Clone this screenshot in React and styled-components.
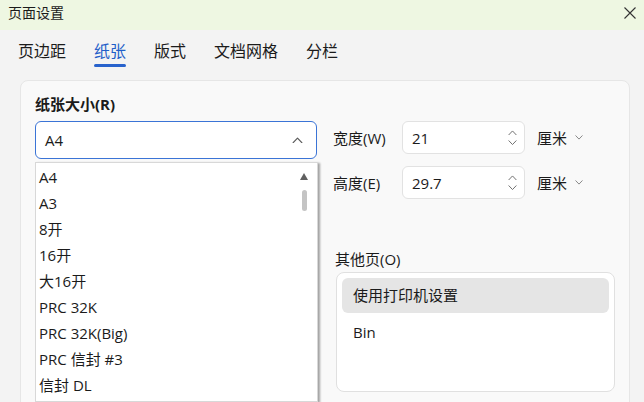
import React from "react";
import styled, {createGlobalStyle} from "styled-components";

const GlobalStyle = createGlobalStyle`
  html, body {
    margin: 0;
    padding: 0;
    background: #f3f3f3;
  }
  body {
    font-family: "Open Sans", "Noto Sans CJK SC", sans-serif;
    color: #1b1b1b;
  }
  #root {
    width: 644px;
    height: 402px;
    overflow: hidden;
  }
`;

const Window = styled.div`
  width: 644px;
  height: 402px;
  background: #f3f3f3;
  display: flex;
  flex-direction: column;
  overflow: hidden;
`;

const TitleBar = styled.div`
  height: 30px;
  flex: none;
  background: #eef7e2;
  display: flex;
  align-items: center;
  justify-content: space-between;
  padding: 0 8px;
`;

const Title = styled.span`
  font-size: 14px;
  line-height: 20px;
  color: #1b1b1b;
  margin-top: -4px;
`;

const CloseButton = styled.div`
  width: 16px;
  height: 16px;
  display: flex;
  align-items: center;
  justify-content: center;
  margin-right: -2px;
  margin-top: -5px;
`;

const Tabs = styled.div`
  display: flex;
  gap: 28px;
  padding: 0 0 0 18px;
  flex: none;
`;

const Tab = styled.div`
  position: relative;
  font-size: 16px;
  line-height: 22px;
  padding: 10px 0 5px;
  color: ${({active}) => (active ? "#1f5fc9" : "#1b1b1b")};

  &::after {
    content: "";
    display: ${({active}) => (active ? "block" : "none")};
    position: absolute;
    left: 0;
    right: 0;
    bottom: 0;
    height: 3px;
    border-radius: 2px;
    background: #2862cc;
  }
`;

const Card = styled.div`
  margin: 13px 14px 0 20px;
  height: 360px;
  flex: none;
  background: #f9f9f9;
  border: 1px solid #e6e6e6;
  border-radius: 8px;
  padding: 13px 14px 0 14px;
  display: grid;
  grid-template-columns: 282px 1fr;
  column-gap: 16px;
  align-content: start;
`;

const SectionLabel = styled.div`
  grid-column: ${({col}) => col || "auto"};
  font-size: 15px;
  line-height: 20px;
  font-weight: ${({bold}) => (bold ? 700 : 400)};
  margin-top: ${({top}) => top || 0}px;
  padding-left: ${({indent}) => indent || 0}px;
`;

const SelectWrap = styled.div`
  position: relative;
  align-self: start;
  margin-top: 7px;
  z-index: 5;
`;

const Select = styled.div`
  height: 38px;
  box-sizing: border-box;
  background: #fff;
  border: 1px solid #3b74d6;
  border-radius: 6px;
  display: flex;
  align-items: center;
  justify-content: space-between;
  padding: 0 13px 0 9px;
  font-size: 15px;
`;

const Dropdown = styled.div`
  position: absolute;
  top: calc(100% + 3px);
  left: 0;
  width: 283px;
  height: 240px;
  box-sizing: border-box;
  background: #fff;
  border: 1px solid #d8d8d8;
  box-shadow: 2px 1px 2px rgba(0, 0, 0, 0.35);
  padding-top: 1px;
  overflow: hidden;
`;

const Option = styled.div`
  height: 26px;
  line-height: 26px;
  font-size: 15px;
  padding-left: 3px;
  white-space: nowrap;
`;

const Scrollbar = styled.div`
  position: absolute;
  top: 10px;
  right: 8px;
  width: 10px;
  display: flex;
  flex-direction: column;
  align-items: center;
  gap: 10px;
`;

const ArrowUp = styled.div`
  width: 0;
  height: 0;
  border-left: 4.5px solid transparent;
  border-right: 4.5px solid transparent;
  border-bottom: 7px solid #606060;
`;

const Thumb = styled.div`
  width: 5px;
  height: 21px;
  border-radius: 3px;
  background: #c4c4c4;
`;

const SizeFields = styled.div`
  display: flex;
  flex-direction: column;
  gap: 12px;
  margin-top: 7px;
`;

const SizeRow = styled.div`
  display: flex;
  align-items: center;
  height: 33px;
`;

const RowLabel = styled.span`
  width: 69px;
  font-size: 15px;
  line-height: 20px;
`;

const NumberInput = styled.div`
  width: 123px;
  height: 33px;
  box-sizing: border-box;
  background: #fff;
  border: 1px solid #e2e2e2;
  border-radius: 6px;
  display: flex;
  align-items: center;
  justify-content: space-between;
  padding: 0 7px 0 9px;
  font-size: 15px;
`;

const Spinner = styled.div`
  display: flex;
  flex-direction: column;
  gap: 4px;
`;

const Unit = styled.span`
  margin-left: 12px;
  font-size: 15px;
  display: flex;
  align-items: center;
  gap: 8px;
`;

const ListBox = styled.div`
  grid-column: ${({col}) => col || "auto"};
  margin-top: 3px;
  margin-left: ${({indent}) => indent || 0}px;
  height: 120px;
  box-sizing: border-box;
  background: #fff;
  border: 1px solid #e0e0e0;
  border-radius: 8px;
  padding: 5px;
  display: flex;
  flex-direction: column;
  gap: 2px;
`;

const ListItem = styled.div`
  height: 35px;
  line-height: 35px;
  padding-left: 11px;
  font-size: 15px;
  border-radius: 6px;
  background: ${({selected}) => (selected ? "#e5e5e5" : "transparent")};
`;

const Chevron = ({up, size = 10, color = "#5a5a5a"}) => (
  <svg width={size} height={size / 2 + 1} viewBox="0 0 10 6" fill="none">
    <path
      d={up ? "M1 5.2 L5 1 L9 5.2" : "M1 0.8 L5 5 L9 0.8"}
      stroke={color}
      strokeWidth="1.1"
      strokeLinecap="round"
      strokeLinejoin="round"
    />
  </svg>
);

const tabs = ["页边距", "纸张", "版式", "文档网格", "分栏"];
const paperSizes = ["A4", "A3", "8开", "16开", "大16开", "PRC 32K", "PRC 32K(Big)", "PRC 信封 #3", "信封 DL"];

function SizeField({label, value}) {
  return (
    <SizeRow>
      <RowLabel>{label}</RowLabel>
      <NumberInput>
        {value}
        <Spinner>
          <Chevron up size={9} color="#707070" />
          <Chevron size={9} color="#707070" />
        </Spinner>
      </NumberInput>
      <Unit>
        厘米
        <Chevron size={8} color="#7a7a7a" />
      </Unit>
    </SizeRow>
  );
}

export default function App() {
  return (
    <Window>
      <GlobalStyle />
      <TitleBar>
        <Title>页面设置</Title>
        <CloseButton>
          <svg width="12" height="12" viewBox="0 0 12 12">
            <path d="M0.5 0.5 L11.5 11.5 M11.5 0.5 L0.5 11.5" stroke="#333" strokeWidth="1.1" />
          </svg>
        </CloseButton>
      </TitleBar>
      <Tabs>
        {tabs.map((t) => (
          <Tab key={t} active={t === "纸张"}>{t}</Tab>
        ))}
      </Tabs>
      <Card>
        <SectionLabel bold>纸张大小(R)</SectionLabel>
        <span />
        <SelectWrap>
          <Select>
            A4
            <Chevron up size={11} />
          </Select>
          <Dropdown>
            {paperSizes.map((p) => (
              <Option key={p}>{p}</Option>
            ))}
            <Scrollbar>
              <ArrowUp />
              <Thumb />
            </Scrollbar>
          </Dropdown>
        </SelectWrap>
        <SizeFields>
          <SizeField label="宽度(W)" value="21" />
          <SizeField label="高度(E)" value="29.7" />
        </SizeFields>
        <SectionLabel col={2} top={50} indent={2}>其他页(O)</SectionLabel>
        <ListBox col={2} indent={3}>
          <ListItem selected>使用打印机设置</ListItem>
          <ListItem>Bin</ListItem>
        </ListBox>
      </Card>
    </Window>
  );
}
